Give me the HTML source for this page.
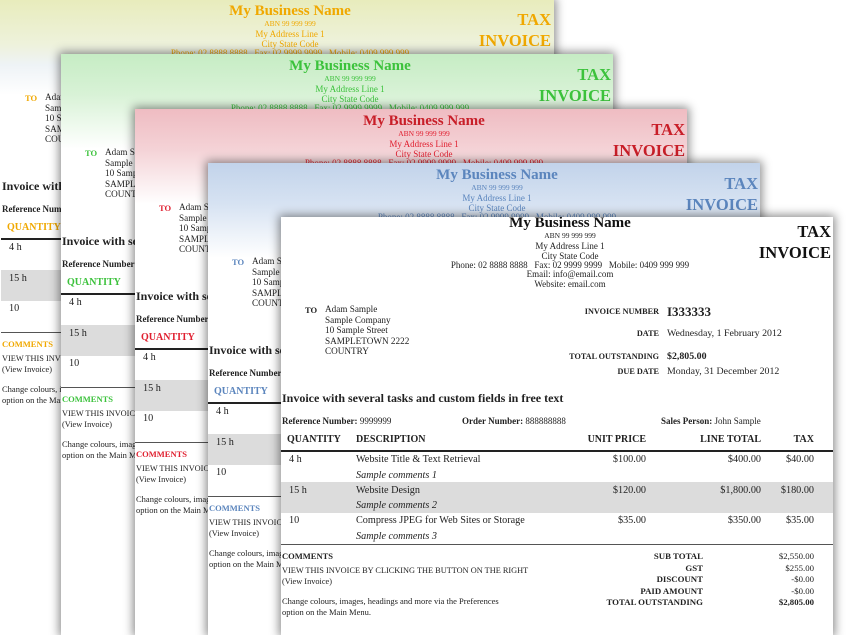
<!DOCTYPE html>
<html style="overflow:hidden;width:846px;height:635px"><head><meta charset="utf-8">
<style>
html,body{margin:0;width:846px;height:635px;overflow:hidden}
body{background:#fff;position:relative;font-family:"Liberation Serif",serif;color:#222}
.pg{position:absolute;width:552px;background:#fff;box-shadow:0 0 9px 2px rgba(0,0,0,.45);overflow:hidden}
.in{position:absolute;left:0;width:552px;height:440px}
.t{position:absolute;white-space:nowrap;line-height:12px;font-size:10.2px}
.c{left:89px;width:400px;text-align:center;font-size:9px}
.b{font-weight:bold}
.k{color:var(--c)}
.h{color:var(--h)}
.hl{position:absolute;left:0;width:552px;top:233px;height:1.5px;background:#222}
.gr{position:absolute;left:0;width:552px;top:265px;height:31px;background:#dcdcdc}
.hl2{position:absolute;left:0;width:552px;top:327px;height:1px;background:#555}
i{font-style:italic}
</style></head><body>

<div class="pg" style="left:-1px;top:0;width:555px;height:635px;--c:#f0a800;--h:#f0a800;background:linear-gradient(#e8ecbc 0,#eef2dc 45px,#eef3f6 65px,#fff 95px)"><div class="in" style="top:5px;left:2px"></div></div>
<div class="pg" style="left:61px;top:54px;height:581px;--c:#3cc23c;--h:#3cc23c;background:linear-gradient(#c6ecc4 0,#d8f2d6 40px,#fff 95px)"><div class="in" style="top:6px"></div></div>
<div class="pg" style="left:135px;top:109px;height:526px;--c:#e02030;--h:#c81e28;background:linear-gradient(#efbcc2 0,#f4d2d6 40px,#fff 95px)"><div class="in" style="top:6px"></div></div>
<div class="pg" style="left:208px;top:163px;height:472px;--c:#5b85bd;--h:#5b85bd;background:linear-gradient(#c2d3ea 0,#d6e2f2 40px,#fff 95px)"><div class="in" style="top:6px"></div></div>
<div class="pg" style="left:281px;top:217px;height:418px;--c:#222;--h:#111"><div class="in" style="top:0"></div></div>

<script>
var P=`
<div class="t c b h" style="top:-3px;font-size:15px;line-height:18px">My Business Name</div>
<div class="t c k" style="top:13px;font-size:7.5px">ABN 99 999 999</div>
<div class="t c k" style="top:23px">My Address Line 1</div>
<div class="t c k" style="top:33px">City State Code</div>
<div class="t c k" style="top:42px">Phone: 02 8888 8888&nbsp;&nbsp; Fax: 02 9999 9999&nbsp;&nbsp; Mobile: 0409 999 999</div>
<div class="t c k" style="top:51px">Email: info@email.com</div>
<div class="t c k" style="top:61px">Website: email.com</div>
<div class="t b h" style="right:2px;top:5px;font-size:16.5px;line-height:20px">TAX</div>
<div class="t b h" style="right:2px;top:26px;font-size:16.5px;line-height:20px">INVOICE</div>
<div class="t b k" style="left:24px;top:87px;font-size:8.5px">TO</div>
<div class="t" style="left:44px;top:87px;line-height:10.5px;font-size:9.2px">Adam Sample<br>Sample Company<br>10 Sample Street<br>SAMPLETOWN 2222<br>COUNTRY</div>
<div class="t b" style="right:174px;top:89px;font-size:8.2px">INVOICE NUMBER</div>
<div class="t b" style="left:386px;top:87px;font-size:13px;line-height:16px">I333333</div>
<div class="t b" style="right:174px;top:111px;font-size:8.2px">DATE</div>
<div class="t" style="left:386px;top:111px;font-size:9.9px">Wednesday, 1 February 2012</div>
<div class="t b" style="right:174px;top:134px;font-size:8.2px">TOTAL OUTSTANDING</div>
<div class="t b" style="left:386px;top:134px;font-size:9.9px">$2,805.00</div>
<div class="t b" style="right:174px;top:149px;font-size:8.2px">DUE DATE</div>
<div class="t" style="left:386px;top:149px;font-size:9.9px">Monday, 31 December 2012</div>
<div class="t b" style="left:1px;top:174px;font-size:12px;line-height:14px">Invoice with several tasks and custom fields in free text</div>
<div class="t" style="left:1px;top:198px;font-size:9px"><b>Reference Number:</b> 9999999</div>
<div class="t" style="left:181px;top:198px;font-size:9px"><b>Order Number:</b> 888888888</div>
<div class="t" style="left:380px;top:198px;font-size:9px"><b>Sales Person:</b> John Sample</div>
<div class="gr"></div>
<div class="t b k" style="left:6px;top:217px;font-size:10px">QUANTITY</div>
<div class="t b" style="left:75px;top:217px;font-size:10px">DESCRIPTION</div>
<div class="t b" style="right:187px;top:217px;font-size:10px">UNIT PRICE</div>
<div class="t b" style="right:72px;top:217px;font-size:10px">LINE TOTAL</div>
<div class="t b" style="right:19px;top:217px;font-size:10px">TAX</div>
<div class="hl"></div>
<div class="t" style="left:8px;top:237px">4 h</div>
<div class="t" style="left:75px;top:237px">Website Title &amp; Text Retrieval</div>
<div class="t" style="right:187px;top:237px">$100.00</div>
<div class="t" style="right:72px;top:237px">$400.00</div>
<div class="t" style="right:19px;top:237px">$40.00</div>
<div class="t" style="left:75px;top:253px"><i>Sample comments 1</i></div>
<div class="t" style="left:8px;top:268px">15 h</div>
<div class="t" style="left:75px;top:268px">Website Design</div>
<div class="t" style="right:187px;top:268px">$120.00</div>
<div class="t" style="right:72px;top:268px">$1,800.00</div>
<div class="t" style="right:19px;top:268px">$180.00</div>
<div class="t" style="left:75px;top:283px"><i>Sample comments 2</i></div>
<div class="t" style="left:8px;top:298px">10</div>
<div class="t" style="left:75px;top:298px">Compress JPEG for Web Sites or Storage</div>
<div class="t" style="right:187px;top:298px">$35.00</div>
<div class="t" style="right:72px;top:298px">$350.00</div>
<div class="t" style="right:19px;top:298px">$35.00</div>
<div class="t" style="left:75px;top:314px"><i>Sample comments 3</i></div>
<div class="hl2"></div>
<div class="t b k" style="left:1px;top:333px;font-size:8.5px">COMMENTS</div>
<div class="t" style="left:1px;top:349px;font-size:8.3px;line-height:10.5px">VIEW THIS INVOICE BY CLICKING THE BUTTON ON THE RIGHT<br>(View Invoice)</div>
<div class="t" style="left:1px;top:379px;font-size:8.5px;line-height:11px">Change colours, images, headings and more via the Preferences<br>option on the Main Menu.</div>
<div class="t b" style="right:130px;top:334px;font-size:8.8px;line-height:11.5px;text-align:right">SUB TOTAL<br>GST<br>DISCOUNT<br>PAID AMOUNT<br>TOTAL OUTSTANDING</div>
<div class="t" style="right:19px;top:334px;font-size:8.8px;line-height:11.5px;text-align:right">$2,550.00<br>$255.00<br>-$0.00<br>-$0.00<br><b>$2,805.00</b></div>
`;
document.querySelectorAll('.in').forEach(function(e){e.innerHTML=P;});
</script>
</body></html>
